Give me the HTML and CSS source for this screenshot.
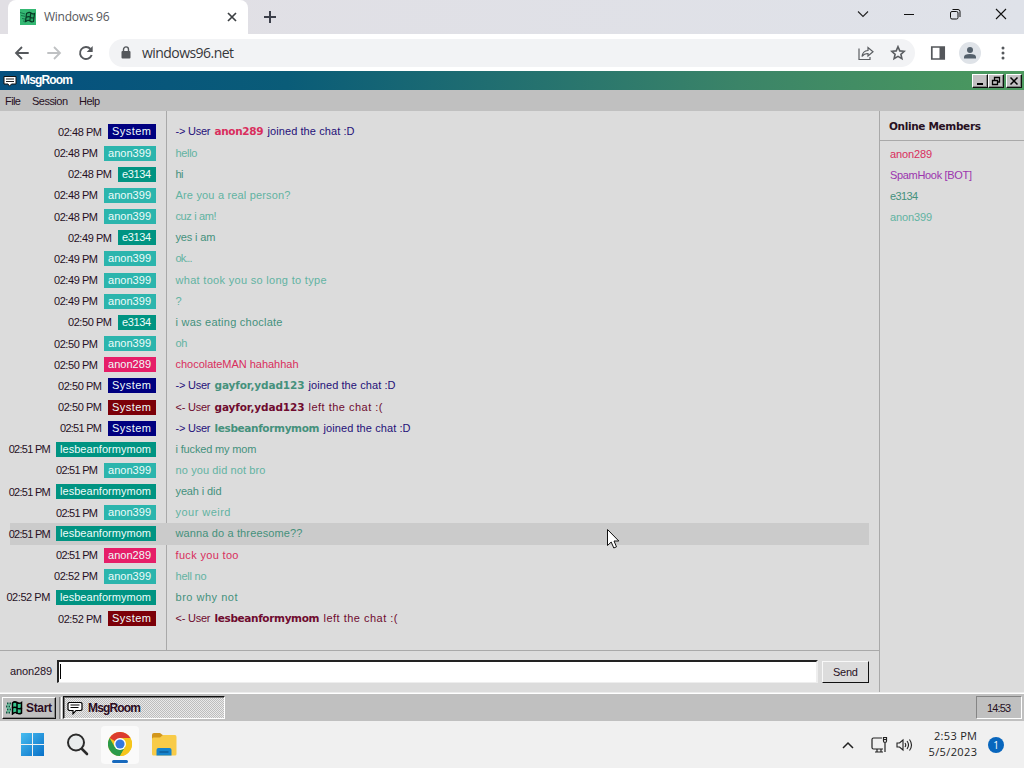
FILE: index.html
```html
<!DOCTYPE html>
<html lang="en">
<head>
<meta charset="utf-8">
<title>Windows 96</title>
<link rel="stylesheet" href="styles.css">
</head>
<body>
<header class="tabs">
  <div class="tab">
    <svg class="favicon" width="16" height="16" viewBox="0 0 16 16"><rect width="16" height="16" fill="#35b873"/><path d="M0 3.500l5 1.500M1 6.500l4 .8M2 9.500l4 .8M3 12l4 .5" stroke="#14754a" stroke-width="1"/><path d="M6.500 4.500q3-2 4.500-.5t3.500.5l-1 8q-2 1-3.500-.5t-4.500.5zM10.700 4l-.8 8M6 8.500q3-1.500 4.500-.2t3.500.2" fill="#2aa565" stroke="#083b25" stroke-width="1.200"/></svg>
    <span class="tab-title" data-w="65.500">Windows 96</span>
    <svg class="tab-close" width="10" height="10" viewBox="0 0 10 10"><path d="M1 1l8 8M9 1l-8 8" stroke="#3c4043" stroke-width="1.700"/></svg>
  </div>
  <svg class="plus" width="14" height="14" viewBox="0 0 14 14"><path d="M7 1v12M1 7h12" stroke="#3c3f4a" stroke-width="2"/></svg>
  <div class="win-controls">
    <svg width="12" height="12" viewBox="0 0 12 12"><path d="M1 3.500l5 5 5-5" fill="none" stroke="#222" stroke-width="1.100"/></svg>
    <svg width="12" height="12" viewBox="0 0 12 12"><path d="M1 6.500h10" stroke="#111"/></svg>
    <svg width="12" height="12" viewBox="0 0 12 12"><rect x="1.500" y="3.500" width="7.500" height="7.500" rx="1.500" fill="none" stroke="#111"/><path d="M3.500 1.500h5.500q2 0 2 2v5.500" fill="none" stroke="#111"/></svg>
    <svg width="12" height="12" viewBox="0 0 12 12"><path d="M1 1l10 10M11 1L1 11" stroke="#111" stroke-width="1.100"/></svg>
  </div>
</header>
<nav class="toolbar">
  <svg class="nav-icon" width="16" height="16" viewBox="0 0 16 16"><path d="M14.700 8H2.500M8 2L2 8l6 6" fill="none" stroke="#55585c" stroke-width="1.800"/></svg>
  <svg class="nav-icon" width="16" height="16" viewBox="0 0 16 16"><path d="M1.300 8h12.200M8 2l6 6-6 6" fill="none" stroke="#bfc1c3" stroke-width="1.800"/></svg>
  <svg class="nav-icon" width="16" height="16" viewBox="0 0 16 16"><path d="M13.700 10A6 6 0 1 1 12.500 4" fill="none" stroke="#55585c" stroke-width="1.900"/><path d="M14.700 1v6h-6z" fill="#55585c"/></svg>
  <div class="omnibox">
    <svg width="10" height="13" viewBox="0 0 10 13"><rect x="0.500" y="5" width="9" height="7.500" rx="1" fill="#54575b"/><path d="M2.500 5V3.400a2.500 2.500 0 0 1 5 0V5" fill="none" stroke="#54575b" stroke-width="1.400"/></svg>
    <span class="url" data-w="92">windows96.net</span>
    <svg class="share" width="16" height="16" viewBox="0 0 16 16"><path d="M1 3.500v11h11V12M4 11.500Q4.500 6 10 5.500V2.500l5 4.300-5 4.200V8.500Q6 8.500 4 11.500z" fill="none" stroke="#5a5d61" stroke-width="1.200"/></svg>
    <svg width="16" height="16" viewBox="0 0 16 16"><path d="M8 1.700l1.800 4.200 4.500.4-3.400 3 1 4.400L8 11.400l-3.900 2.300 1-4.400-3.400-3 4.500-.4z" fill="none" stroke="#5a5d61" stroke-width="1.600"/></svg>
  </div>
  <svg class="panel-icon" width="16" height="16" viewBox="0 0 16 16"><path d="M1.800 2h12.400v12H1.800z" fill="none" stroke="#54575b" stroke-width="1.700"/><path d="M9.500 2H14v12H9.500z" fill="#54575b"/></svg>
  <svg class="avatar" width="22" height="22" viewBox="0 0 22 22"><circle cx="11" cy="11" r="11" fill="#dfe3e8"/><circle cx="11" cy="8" r="3" fill="#54606b"/><path d="M5 16.500v-1.500q0-3 6-3t6 3v1.500z" fill="#54606b"/></svg>
  <svg class="dots" width="4" height="14" viewBox="0 0 4 14"><g fill="#55585c"><circle cx="2" cy="2" r="1.500"/><circle cx="2" cy="7" r="1.500"/><circle cx="2" cy="12" r="1.500"/></g></svg>
</nav>
<div class="titlebar">
  <svg width="14" height="12" viewBox="0 0 14 12"><path d="M1 1.500h12v7.500H8.500L6.500 11.200 5 9H1z" fill="#fff" stroke="#111"/><path d="M3 4h8M3 6.500h8" stroke="#222"/></svg>
  <b data-w="53">MsgRoom</b>
  <div class="caption-buttons">
    <i class="cap"><svg width="12" height="10" viewBox="0 0 12 10"><path d="M3 8h6" stroke="#000" stroke-width="2"/></svg></i>
    <i class="cap"><svg width="12" height="10" viewBox="0 0 12 10"><path d="M4.500 4V1.500h5v4.500H8M4 1.500h6M2.500 4.500h5v4h-5zM2 4.500h6" fill="none" stroke="#000" stroke-width="1.300"/></svg></i>
    <i class="cap last"><svg width="12" height="10" viewBox="0 0 12 10"><path d="M2.500 1.500l7 7M9.500 1.500l-7 7" stroke="#000" stroke-width="1.500"/></svg></i>
  </div>
</div>
<div class="menubar"><span data-w="16">File</span><span data-w="36">Session</span><span data-w="21">Help</span></div>
<main class="app">
  <section class="chat">
    <div class="log">
      <div class="row"><div class="who"><time data-w="44">02:48 PM</time><span class="tag navy"><span data-w="39">System</span></span></div><p class="msg join"><span data-w="35">-&gt; User</span><b class="pink-t" data-w="49">anon289</b><span data-w="87">joined the chat :D</span></p></div>
      <div class="row"><div class="who"><time data-w="44">02:48 PM</time><span class="tag aqua"><span data-w="43">anon399</span></span></div><p class="msg aqua-t"><span data-w="22">hello</span></p></div>
      <div class="row"><div class="who"><time data-w="44">02:48 PM</time><span class="tag teal"><span data-w="29">e3134</span></span></div><p class="msg teal-t"><span data-w="8">hi</span></p></div>
      <div class="row"><div class="who"><time data-w="44">02:48 PM</time><span class="tag aqua"><span data-w="43">anon399</span></span></div><p class="msg aqua-t"><span data-w="115">Are you a real person?</span></p></div>
      <div class="row"><div class="who"><time data-w="44">02:48 PM</time><span class="tag aqua"><span data-w="43">anon399</span></span></div><p class="msg aqua-t"><span data-w="41">cuz i am!</span></p></div>
      <div class="row"><div class="who"><time data-w="44">02:49 PM</time><span class="tag teal"><span data-w="29">e3134</span></span></div><p class="msg teal-t"><span data-w="40">yes i am</span></p></div>
      <div class="row"><div class="who"><time data-w="44">02:49 PM</time><span class="tag aqua"><span data-w="43">anon399</span></span></div><p class="msg aqua-t"><span data-w="17">ok...</span></p></div>
      <div class="row"><div class="who"><time data-w="44">02:49 PM</time><span class="tag aqua"><span data-w="43">anon399</span></span></div><p class="msg aqua-t"><span data-w="151">what took you so long to type</span></p></div>
      <div class="row"><div class="who"><time data-w="44">02:49 PM</time><span class="tag aqua"><span data-w="43">anon399</span></span></div><p class="msg aqua-t"><span data-w="6">?</span></p></div>
      <div class="row"><div class="who"><time data-w="44">02:50 PM</time><span class="tag teal"><span data-w="29">e3134</span></span></div><p class="msg teal-t"><span data-w="107">i was eating choclate</span></p></div>
      <div class="row"><div class="who"><time data-w="44">02:50 PM</time><span class="tag aqua"><span data-w="43">anon399</span></span></div><p class="msg aqua-t"><span data-w="12">oh</span></p></div>
      <div class="row"><div class="who"><time data-w="44">02:50 PM</time><span class="tag pink"><span data-w="43">anon289</span></span></div><p class="msg pink-t"><span data-w="123">chocolateMAN hahahhah</span></p></div>
      <div class="row"><div class="who"><time data-w="44">02:50 PM</time><span class="tag navy"><span data-w="39">System</span></span></div><p class="msg join"><span data-w="35">-&gt; User</span><b class="teal-t" data-w="90">gayfor,ydad123</b><span data-w="87">joined the chat :D</span></p></div>
      <div class="row"><div class="who"><time data-w="44">02:50 PM</time><span class="tag maroon"><span data-w="39">System</span></span></div><p class="msg left"><span data-w="35">&lt;- User</span><b data-w="90">gayfor,ydad123</b><span data-w="74">left the chat :(</span></p></div>
      <div class="row"><div class="who"><time data-w="42">02:51 PM</time><span class="tag navy"><span data-w="39">System</span></span></div><p class="msg join"><span data-w="35">-&gt; User</span><b class="teal-t" data-w="105">lesbeanformymom</b><span data-w="87">joined the chat :D</span></p></div>
      <div class="row"><div class="who"><time data-w="42">02:51 PM</time><span class="tag teal"><span data-w="91">lesbeanformymom</span></span></div><p class="msg teal-t"><span data-w="81">i fucked my mom</span></p></div>
      <div class="row"><div class="who"><time data-w="42">02:51 PM</time><span class="tag aqua"><span data-w="43">anon399</span></span></div><p class="msg aqua-t"><span data-w="90">no you did not bro</span></p></div>
      <div class="row"><div class="who"><time data-w="42">02:51 PM</time><span class="tag teal"><span data-w="91">lesbeanformymom</span></span></div><p class="msg teal-t"><span data-w="46">yeah i did</span></p></div>
      <div class="row"><div class="who"><time data-w="42">02:51 PM</time><span class="tag aqua"><span data-w="43">anon399</span></span></div><p class="msg aqua-t"><span data-w="55">your weird</span></p></div>
      <div class="row hover"><div class="who"><time data-w="42">02:51 PM</time><span class="tag teal"><span data-w="91">lesbeanformymom</span></span></div><p class="msg teal-t"><span data-w="127">wanna do a threesome??</span></p></div>
      <div class="row"><div class="who"><time data-w="42">02:51 PM</time><span class="tag pink"><span data-w="43">anon289</span></span></div><p class="msg pink-t"><span data-w="63">fuck you too</span></p></div>
      <div class="row"><div class="who"><time data-w="44">02:52 PM</time><span class="tag aqua"><span data-w="43">anon399</span></span></div><p class="msg aqua-t"><span data-w="31">hell no</span></p></div>
      <div class="row"><div class="who"><time data-w="44">02:52 PM</time><span class="tag teal"><span data-w="91">lesbeanformymom</span></span></div><p class="msg teal-t"><span data-w="62">bro why not</span></p></div>
      <div class="row"><div class="who"><time data-w="44">02:52 PM</time><span class="tag maroon"><span data-w="39">System</span></span></div><p class="msg left"><span data-w="35">&lt;- User</span><b data-w="105">lesbeanformymom</b><span data-w="74">left the chat :(</span></p></div>
    </div>
    <div class="composer">
      <span class="nick" data-w="42">anon289</span>
      <div class="field"><i class="caret"></i></div>
      <div class="send"><span data-w="25">Send</span></div>
    </div>
  </section>
  <aside class="members">
    <h2><span data-w="92">Online Members</span></h2>
    <ul>
      <li class="pink-t"><span data-w="42">anon289</span></li>
      <li class="purple-t"><span data-w="82">SpamHook [BOT]</span></li>
      <li class="teal-t"><span data-w="28">e3134</span></li>
      <li class="aqua-t"><span data-w="42">anon399</span></li>
    </ul>
  </aside>
</main>
<div class="taskbar96">
  <div class="start"><svg width="17" height="14" viewBox="0 0 17 14"><path d="M1 2.500h5M0 5.500h5M1 8.500h5M0 11.500h5" stroke="#0b5b42" stroke-width="2" stroke-dasharray="1.500 1"/><path d="M1 4h4M1 7h4M1 10h4" stroke="#36c58c"/><path d="M6.500 2q2-2 4.500-.5T15.500 1.500v10.500q-2.500 1.500-4.500 0t-4.500 1z" fill="#36c58c" stroke="#000" stroke-width="1.500"/><path d="M11 1v12M6 7q3-1.500 5 0t5 0" fill="none" stroke="#000" stroke-width="1.500"/></svg><b data-w="26">Start</b></div>
  <i class="grip"></i>
  <div class="task"><svg width="16" height="14" viewBox="0 0 16 14"><path d="M2 1.500h12l1 1v6l-1 1H9L6 12.800V9.500H2l-1-1v-6z" fill="#fff" stroke="#000" stroke-width="1.200"/><path d="M3.500 4h9M3.500 6.500h8" stroke="#000"/></svg><b data-w="53">MsgRoom</b></div>
  <div class="clock96"><span data-w="24">14:53</span></div>
</div>
<footer class="taskbar11">
  <svg class="win-logo" width="23" height="23" viewBox="0 0 23 23"><defs><linearGradient id="w" x2="1" y2="1"><stop stop-color="#48bdf0"/><stop offset="1" stop-color="#0870c8"/></linearGradient></defs><path d="M0 0h11v11H0zM12 0h11v11H12zM0 12h11v11H0zM12 12h11v11H12z" fill="url(#w)"/></svg>
  <svg class="search" width="23" height="23" viewBox="0 0 23 23"><circle cx="10" cy="9.500" r="8" fill="#e9eced" stroke="#2b2b2b" stroke-width="2"/><path d="M16 16l5 5" stroke="#2b2b2b" stroke-width="2.600" stroke-linecap="round"/></svg>
  <div class="active-app">
    <svg width="24" height="24" viewBox="0 0 24 24"><circle cx="12" cy="12" r="12" fill="#f5c51c"/><path d="M12 12L1.600 6A12 12 0 0 1 22.400 6H12z" fill="#dc3b2e"/><path d="M1.600 6A12 12 0 0 0 12 24l5.200-9L12 12 6.800 15z" fill="#2b9b4a"/><path d="M22.400 6A12 12 0 0 1 12 24l5.200-9V6z" fill="#f5c51c"/><circle cx="12" cy="12" r="6" fill="#fff"/><circle cx="12" cy="12" r="4.600" fill="#3478e0"/></svg>
    <i></i>
  </div>
  <svg class="folder" width="25" height="23" viewBox="0 0 25 23"><path d="M0 2q0-2 2-2h6l4 3v5H0z" fill="#d2961c"/><path d="M0 6q0-1.500 1.500-1.500H8L11 2h12q1.500 0 1.500 2v17q0 1.500-1.500 1.500H1.500Q0 22.500 0 21z" fill="#f8cb48"/><path d="M4.500 22.500V17q0-2 2-2h11q2 0 2 2v5.500z" fill="#1583cc"/><path d="M7.500 19h9" stroke="#0d5c9b" stroke-width="1.500"/></svg>
  <svg class="chevron" width="12" height="8" viewBox="0 0 12 8"><path d="M1 7l5-5 5 5" fill="none" stroke="#222" stroke-width="1.500"/></svg>
  <svg class="net" width="17" height="17" viewBox="0 0 17 17"><path d="M11 2H2.500Q1 2 1 3.500v8Q1 13 2.500 13H12M6 13v3M10 13v3M4 16h8M12.500 1.500h3V5q0 1.500-1.500 1.500T12.500 5zM14 6.500V16M12.500 3.500h3" fill="none" stroke="#222" stroke-width="1.200"/></svg>
  <svg class="sound" width="17" height="14" viewBox="0 0 17 14"><path d="M1 5h2.500L7 2v10L3.500 9H1zM9 5q1.500 2 0 4M11 3q3 4 0 8M13.500 1.500q4 5.500 0 11" fill="none" stroke="#222" stroke-width="1.100"/></svg>
  <div class="datetime"><span data-w="43">2:53 PM</span><span data-w="48.500">5/5/2023</span></div>
  <div class="badge">1</div>
</footer>
<svg class="cursor" width="14" height="22" viewBox="0 0 14 22"><path d="M1.500 1.500v16l3.700-3.500 2.600 6 2.700-1.200L8 13h4.800z" fill="#fff" stroke="#111"/></svg>
<script src="fit.js"></script>
</body>
</html>
```
FILE: styles.css
```css
* { box-sizing: border-box; }
body { margin: 0; width: 1024px; height: 768px; overflow: hidden; display: flex; flex-direction: column; font: 11px/14px "Liberation Sans", Arial, sans-serif; color: #27101f; background: #dcdcdc; }
svg { display: block; flex: none; }
p, h2, ul { margin: 0; padding: 0; }
[data-w] { display: inline-block; white-space: pre; }

.tabs { height: 34px; flex: none; background: linear-gradient(90deg, #e1dfe4, #dfe2e9); display: flex; align-items: center; padding-left: 8px; }
.tab { width: 240px; height: 34px; background: #fff; border-radius: 8px 8px 0 0; display: flex; align-items: center; padding: 0 11px 0 12px; }
.tab-title { margin-left: 8px; font: 12px/16px "Open Sans", sans-serif; color: #55575b; }
.tab-close { margin-left: auto; }
.plus { margin-left: 15px; }
.win-controls { margin-left: auto; display: flex; gap: 34px; padding: 0 17px 6px 0; }

.toolbar { height: 37px; flex: none; background: #fff; display: flex; align-items: center; padding-left: 14px; }
.nav-icon { margin-right: 16px; }
.omnibox { width: 806px; height: 28px; margin-left: -1px; border-radius: 14px; background: #f2f3f5; display: flex; align-items: center; padding: 0 9px 0 12px; gap: 11px; }
.url { font: 14px/18px "Open Sans", sans-serif; color: #37383b; }
.share { margin-left: auto; margin-right: 5px; }
.panel-icon { margin-left: 15px; }
.avatar { margin-left: 13px; }
.dots { margin-left: 20px; }

.titlebar { height: 19px; flex: none; display: flex; align-items: center; padding-left: 3px; background: linear-gradient(90deg, #05507f 0%, #0a5c78 28%, #3b8468 72%, #4c9a5e 100%); color: #fff; }
.titlebar b { margin-left: 3px; font-size: 12px; line-height: 14px; padding-bottom: 1px; }
.caption-buttons { margin-left: auto; display: flex; padding: 1px 2px 0 0; }
.cap { width: 16px; height: 14px; background: #c3c1c3; border: 1px solid; border-color: #fff #111 #111 #fff; box-shadow: inset -1px -1px #858585; display: grid; place-items: center; }
.cap.last { margin-left: 2px; }
.menubar { height: 21px; flex: none; background: #c0c0c0; display: flex; gap: 11px; align-items: center; padding-left: 5px; }

.app { flex: 1; min-height: 0; display: flex; border-bottom: 1px solid #ededed; }
.chat { width: 880px; display: flex; flex-direction: column; border-right: 1px solid #a9a9a9; }
.log { height: 540px; padding: 10.400px 10px 0; background: linear-gradient(#a9a9a9, #a9a9a9) 166px 0 / 1px 100% no-repeat; border-bottom: 1px solid #a9a9a9; }
.row { height: 21.170px; display: flex; align-items: center; }
.hover { background: #cbcbcb; }
.who { width: 146px; flex: none; display: flex; justify-content: flex-end; align-items: center; gap: 6px; white-space: nowrap; }
.tag { height: 15px; line-height: 15px; padding: 0 5px 0 4px; color: #eefcfa; }
.msg { margin-left: 19.500px; display: flex; gap: 4px; line-height: 14px; padding-bottom: 1px; white-space: nowrap; }
.msg b { font-family: "DejaVu Sans", Verdana, sans-serif; font-size: 10.500px; }
.navy { background: #000080; }
.maroon { background: #7c0008; }
.aqua { background: #2cb5ad; }
.teal { background: #009482; }
.pink { background: #e61e68; }
.join { color: #251079; }
.left { color: #6f0b2f; }
.aqua-t { color: #62b3a2; }
.teal-t { color: #45917c; }
.pink-t { color: #d92e5d; }
.purple-t { color: #9b35ae; }

.composer { flex: 1; display: flex; align-items: center; padding-left: 10px; }
.nick { padding-bottom: 1px; }
.field { width: 761px; height: 23px; margin-left: 5px; background: #fff; border: 1px solid; border-color: #222 #eee #eee #222; border-width: 2px 2px 1px 2px; }
.caret { display: block; width: 1px; height: 15px; margin: 2px 0 0 1px; background: #000; }
.send { width: 47px; height: 22px; margin-left: 4px; border: 1px solid; border-color: #f8f8f8 #111 #111 #f8f8f8; display: grid; place-items: center; }

.members { flex: 1; }
.members h2 { height: 30px; font: bold 10.500px/30px "DejaVu Sans", Verdana, sans-serif; padding-left: 9px; border-bottom: 1px solid #a9a9a9; }
.members ul { list-style: none; padding: 3px 0 0 10px; }
.members li { height: 21px; line-height: 21px; }

.taskbar96 { height: 28px; flex: none; background: #c0c0c0; border-top: 1px solid #fff; display: flex; align-items: center; padding: 0 2px; }
.start { width: 54px; height: 22px; display: flex; align-items: center; gap: 3px; padding-left: 3px; border: 1px solid; border-color: #fff #111 #111 #fff; box-shadow: inset -1px -1px #888; }
.start b, .task b { font-size: 12px; color: #2a0b22; }
.grip { width: 3px; height: 22px; margin-left: 3px; background: #bbb; border-left: 1px solid #888; border-right: 1px solid #fff; }
.task { width: 162px; height: 23px; margin-left: 1px; display: flex; align-items: center; gap: 5px; padding-left: 3px; border: 1px solid; border-color: #111 #fff #fff #111; box-shadow: inset 1px 1px #777; background: repeating-conic-gradient(#bdbdbd 0 25%, #e9e9e9 0 50%) 0 0 / 2px 2px; }
.clock96 { width: 46px; height: 23px; margin-left: auto; display: grid; place-items: center; border: 1px solid; border-color: #858585 #fff #fff #858585; }

.taskbar11 { height: 47px; flex: none; background: #f0f0f0; display: flex; align-items: center; padding-left: 21px; color: #242424; }
.search { margin-left: 22px; }
.active-app { width: 38px; height: 38px; margin-left: 12px; background: #fafafa; border-radius: 4px; display: flex; flex-direction: column; align-items: center; padding-top: 6px; gap: 4px; }
.active-app i { width: 16px; height: 3px; border-radius: 2px; background: #1769bd; }
.folder { margin-left: 13px; margin-bottom: 1px; }
.chevron { margin-left: 665px; }
.net { margin-left: 17px; }
.sound { margin-left: 8px; }
.datetime { width: 64px; display: flex; flex-direction: column; align-items: flex-end; font: 11px/16px "Open Sans", sans-serif; padding-bottom: 1px; }
.badge { width: 16px; height: 16px; margin-left: 11px; border-radius: 50%; background: #0866bd; color: #fff; font: 10px/16px "Open Sans", sans-serif; text-align: center; }
.cursor { position: absolute; left: 606px; top: 528px; }
```
FILE: fit.js
```js
// Spaces each label's letters so it occupies the width given in data-w.
document.querySelectorAll('[data-w]').forEach(function (el) {
  el.style.width = 'auto';
  var target = parseFloat(el.dataset.w);
  var range = document.createRange();
  range.selectNodeContents(el);
  var natural = range.getBoundingClientRect().width;
  var gaps = Math.max(1, el.textContent.length - 1);
  el.style.letterSpacing = (target - natural) / gaps + 'px';
  el.style.width = target + 'px';
});
```
